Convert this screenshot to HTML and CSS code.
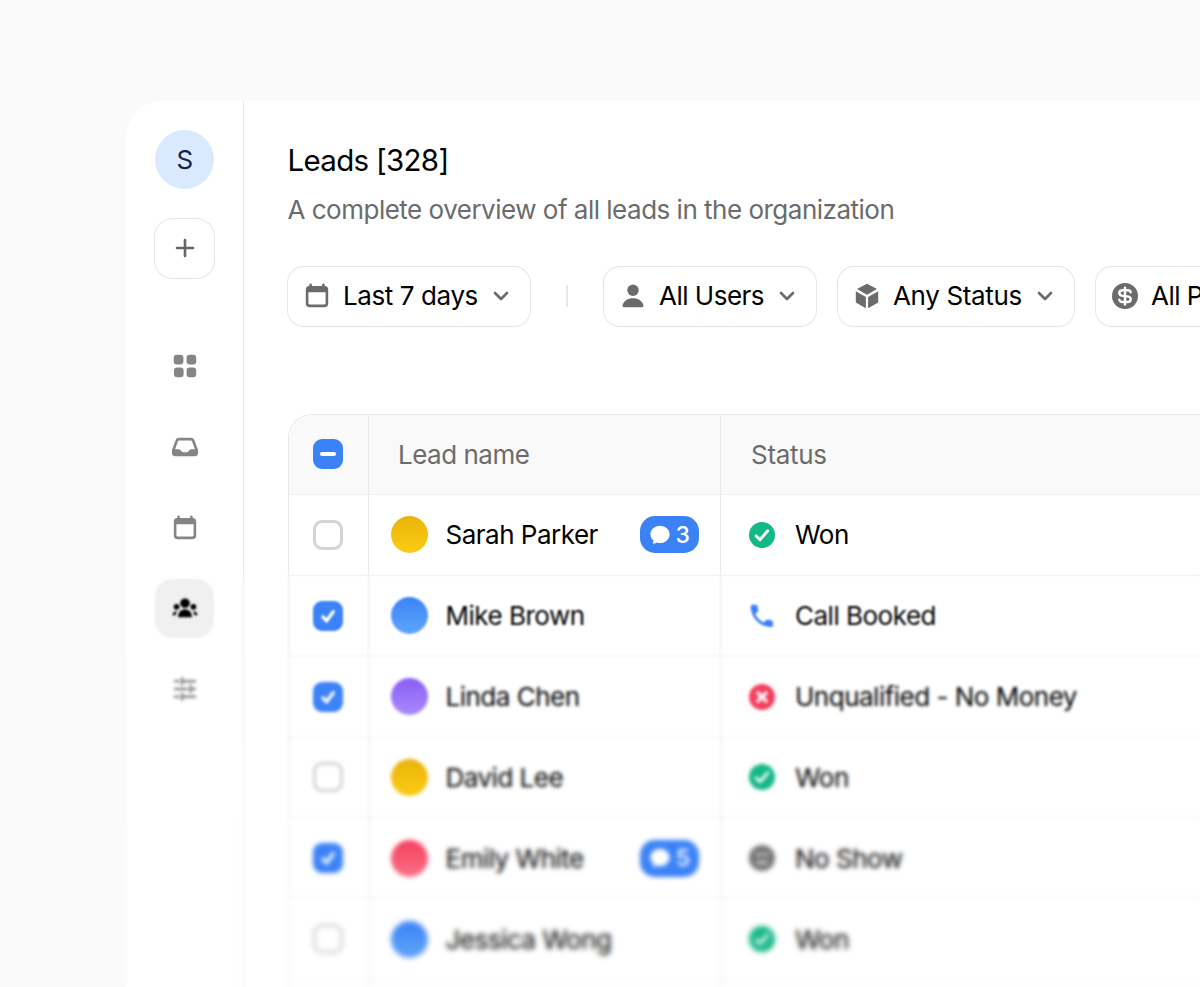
FILE: index.html
```html
<!DOCTYPE html>
<html lang="en">
<head>
<meta charset="utf-8">
<title>Leads</title>
<link rel="stylesheet" href="styles.css">
</head>
<body>
<svg class="defs" width="0" height="0" aria-hidden="true">
  <symbol id="calendar" viewBox="0 0 26 28">
    <path fill="currentColor" fill-rule="evenodd" d="M5.300 2.700a1.300 1.300 0 0 1 2.600 0V4h10.200V2.700a1.300 1.300 0 0 1 2.600 0V4a3.800 3.800 0 0 1 3.500 3.800v13.400a4 4 0 0 1-4 4H5.800a4 4 0 0 1-4-4V7.800A3.800 3.800 0 0 1 5.300 4zM4.400 10.200v10.800a1.600 1.600 0 0 0 1.600 1.600h14a1.600 1.600 0 0 0 1.600-1.600V10.200z"/>
  </symbol>
  <symbol id="chevron" viewBox="0 0 16 10"><path d="M2 2l6 6 6-6" fill="none" stroke="currentColor" stroke-width="2.700" stroke-linecap="round" stroke-linejoin="round"/></symbol>
  <symbol id="check" viewBox="0 0 30 30"><path d="M9.900 15.900l3.600 4 6.700-9.200" fill="none" stroke="#fff" stroke-width="3.400" stroke-linecap="round" stroke-linejoin="round"/></symbol>
  <symbol id="won" viewBox="0 0 26 26"><circle cx="13" cy="13" r="13" fill="#12b886"/><path d="M7.200 13.900l3.800 3.900 7.700-9" fill="none" stroke="#fff" stroke-width="2.900" stroke-linecap="round" stroke-linejoin="round"/></symbol>
  <symbol id="bubble" viewBox="0 0 20 20"><path fill="#fff" d="M10 .8c5.300 0 9.600 3.800 9.600 8.600S15.300 18 10 18c-1.300 0-2.400-.2-3.400-.6-1 .8-2.300 1.300-3.600 1.200-.4 0-.5-.5-.2-.8.500-.7.800-1.600.7-2.500C1.500 13.700.4 11.700.4 9.400.4 4.600 4.700.8 10 .8z"/></symbol>
</svg>
<div class="panel">
  <aside class="sidebar">
    <div class="user">S</div>
    <button class="add"><svg width="20" height="20" viewBox="0 0 20 20"><path d="M10 2v16M2 10h16" stroke="#666" stroke-width="2.600" stroke-linecap="round"/></svg></button>
    <nav class="nav">
      <a class="nav-item"><svg width="24" height="24" viewBox="0 0 24 24" fill="currentColor"><rect x=".800" y=".800" width="9.600" height="9.600" rx="3"/><rect x="13.600" y=".800" width="9.600" height="9.600" rx="3"/><rect x="1" y="13.600" width="9.600" height="9.600" rx="3"/><rect x="13.600" y="13.600" width="9.600" height="9.600" rx="3"/></svg></a>
      <a class="nav-item"><svg width="28" height="20" viewBox="0 0 28 20"><path fill="currentColor" fill-rule="evenodd" d="M7.700.7h12.600a3 3 0 0 1 2.800 1.900l3.600 9.300q.3.700.3 1.500v2.600a3.300 3.300 0 0 1-3.300 3.300H4.300A3.300 3.300 0 0 1 1 16v-2.600q0-.8.300-1.500l3.600-9.300A3 3 0 0 1 7.700.7zm.4 2.700a1 1 0 0 0-1 .7L4.100 12.200h3.800q.9 0 1.500.8l1.100 1.300q.7.900 1.800.9h3.400q1.100 0 1.800-.9l1.100-1.300q.6-.8 1.500-.8h3.800L20.900 4.100a1 1 0 0 0-1-.7z"/></svg></a>
      <a class="nav-item"><svg width="26" height="28"><use href="#calendar"/></svg></a>
      <a class="nav-item active"><svg width="26" height="20" viewBox="0 0 26 20" fill="currentColor"><circle cx="13" cy="5.200" r="4.800"/><circle cx="4.600" cy="8.800" r="2.900"/><circle cx="21.400" cy="8.800" r="2.900"/><path d="M6 19.300c0-4.400 2.700-8 7-8s7 3.600 7 8zM4.900 13.300c-2.500 0-4.200 1.500-4.500 3.900h3.200c.2-1.400.7-2.700 1.300-3.900zM21.100 13.300c2.500 0 4.200 1.500 4.500 3.900h-3.200c-.2-1.400-.7-2.700-1.300-3.900z"/></svg></a>
      <a class="nav-item"><svg width="24" height="24" viewBox="0 0 24 24" fill="none" stroke="currentColor" stroke-width="2.400" stroke-linecap="round"><path d="M2 4.300h3.500M9 4.300h13M9 1.300v6M2 12h12M18.500 12H22M17.500 9v6M2 19.700h3.500M9 19.700h13M9 16.700v6"/></svg></a>
    </nav>
  </aside>
  <main class="main">
    <h1 class="title">Leads [328]</h1>
    <p class="subtitle">A complete overview of all leads in the organization</p>
    <div class="filters">
      <button class="filter filter-date"><svg width="26" height="28"><use href="#calendar"/></svg><span>Last 7 days</span><svg class="chev" width="16" height="10"><use href="#chevron"/></svg></button>
      <i class="separator"></i>
      <button class="filter filter-users"><svg width="26" height="26" viewBox="0 0 26 26" fill="currentColor"><circle cx="13" cy="7.300" r="5.700"/><path d="M2.600 22.500C3.500 17.900 7.800 15.300 13 15.300s9.500 2.600 10.400 7.200c.2.900-.4 1.700-1.300 1.700H3.900c-.9 0-1.500-.8-1.300-1.700z"/></svg><span>All Users</span><svg class="chev" width="16" height="10"><use href="#chevron"/></svg></button>
      <button class="filter filter-status"><svg width="26" height="26" viewBox="0 0 26 26" fill="currentColor"><path d="M13 .7l10 5.400-10 5.700L3 6.100zM1.800 8.200l10.100 5.700v11.300L1.800 19.500zM24.200 8.200v11.300l-10.100 5.700V13.900z"/></svg><span>Any Status</span><svg class="chev" width="16" height="10"><use href="#chevron"/></svg></button>
      <button class="filter filter-price"><svg width="26" height="26" viewBox="0 0 26 26"><circle cx="13" cy="13" r="13" fill="currentColor"/><path d="M18.700 9.300C18.500 8 17.200 7.200 15.300 7.200h-4.600C8.600 7.200 7.300 8.300 7.300 10s1.300 2.600 3.300 2.900l4.800.5c2 .3 3.300 1.200 3.300 2.900s-1.300 2.700-3.400 2.700h-4.600c-1.900 0-3.200-.8-3.400-2.400M13 4.600v16.800" fill="none" stroke="#fff" stroke-width="2.400" stroke-linecap="round"/></svg><span>All P</span></button>
    </div>
    <div class="table">
      <div class="row head"><div class="cell pick"><b class="box on"><i class="dash"></i></b></div><div class="cell th">Lead name</div><div class="cell th">Status</div></div>
      <div class="row"><div class="cell pick"><b class="box"></b></div><div class="cell name"><i class="dot amber"></i><span>Sarah Parker</span><b class="badge"><svg width="20" height="20"><use href="#bubble"/></svg>3</b></div><div class="cell status"><svg width="26" height="26"><use href="#won"/></svg><span>Won</span></div></div>
      <div class="row"><div class="cell pick"><b class="box on"><svg width="30" height="30"><use href="#check"/></svg></b></div><div class="cell name"><i class="dot blue"></i><span>Mike Brown</span></div><div class="cell status"><svg width="26" height="26" viewBox="0 0 26 26"><path fill="#3b82f6" d="M3.600 1.800h3.200c.8 0 1.400.5 1.600 1.300l.8 4.100c.1.600-.1 1.200-.5 1.600L6.300 10.900c1.800 4 4.700 6.800 8.500 8.500l2.300-2.300c.4-.4 1-.6 1.600-.5l4 .8c.8.200 1.300.8 1.300 1.600v3.200c0 1.200-1 2-2.200 1.900C10.700 23.400 2.500 15.400 1.700 4c-.1-1.200.7-2.200 1.900-2.200z"/></svg><span>Call Booked</span></div></div>
      <div class="row"><div class="cell pick"><b class="box on"><svg width="30" height="30"><use href="#check"/></svg></b></div><div class="cell name"><i class="dot violet"></i><span>Linda Chen</span></div><div class="cell status"><svg width="26" height="26" viewBox="0 0 26 26"><circle cx="13" cy="13" r="13" fill="#f43f5e"/><path d="M9 9l8 8M17 9l-8 8" stroke="#fff" stroke-width="3.200" stroke-linecap="round"/></svg><span>Unqualified - No Money</span></div></div>
      <div class="row"><div class="cell pick"><b class="box"></b></div><div class="cell name"><i class="dot amber"></i><span>David Lee</span></div><div class="cell status"><svg width="26" height="26"><use href="#won"/></svg><span>Won</span></div></div>
      <div class="row"><div class="cell pick"><b class="box on"><svg width="30" height="30"><use href="#check"/></svg></b></div><div class="cell name"><i class="dot rose"></i><span>Emily White</span><b class="badge"><svg width="20" height="20"><use href="#bubble"/></svg>5</b></div><div class="cell status"><svg width="26" height="26" viewBox="0 0 26 26"><circle cx="13" cy="13" r="13" fill="#757575"/><path d="M8 9.500h3M15 9.500h3M8.500 17.500h9" fill="none" stroke="#fff" stroke-width="2.200" stroke-linecap="round"/></svg><span>No Show</span></div></div>
      <div class="row"><div class="cell pick"><b class="box"></b></div><div class="cell name"><i class="dot blue"></i><span>Jessica Wong</span></div><div class="cell status"><svg width="26" height="26"><use href="#won"/></svg><span>Won</span></div></div>
      <div class="row"><div class="cell pick"></div><div class="cell name"></div><div class="cell status"></div></div>
    </div>
  </main>
</div>
<div class="haze haze-1"></div>
<div class="haze haze-2"></div>
<div class="haze haze-3"></div>
<div class="haze haze-4"></div>
<div class="haze haze-5"></div>
</body>
</html>
```
FILE: styles.css
```css
* { box-sizing: border-box; }
body {
  margin: 0;
  height: 987px;
  overflow: hidden;
  background: #fafafa;
  font-family: Inter, "Liberation Sans", sans-serif;
  font-size: 26px;
  letter-spacing: -.5px;
  color: #000;
  position: relative;
  display: flow-root;
}
svg { display: block; flex: none; }
.defs { position: absolute; }
button { font: inherit; letter-spacing: inherit; color: inherit; padding: 0; border: 0; background: #fff; }
.panel {
  margin: 101px 0 0 126px;
  height: 886px;
  overflow: hidden;
  display: flex;
  background: #fff;
  border-radius: 36px 0 0 0;
}
.sidebar {
  width: 118px;
  flex: none;
  padding-top: 29px;
  display: flex;
  flex-direction: column;
  align-items: center;
  border-right: 1px solid #e8e8e8;
}
.user {
  width: 59px;
  height: 59px;
  flex: none;
  border-radius: 50%;
  background: #dbe9fe;
  color: #14204d;
  display: grid;
  place-items: center;
}
.add {
  width: 59px;
  height: 59px;
  flex: none;
  margin-top: 29.500px;
  border-radius: 18px;
  display: grid;
  place-items: center;
  box-shadow: 0 0 0 1px #e6e6e6, 0 1px 2px rgba(0, 0, 0, .04);
}
.nav { margin-top: 59px; display: flex; flex-direction: column; gap: 21.800px; }
.nav-item {
  width: 59px;
  height: 59px;
  flex: none;
  border-radius: 18px;
  display: grid;
  place-items: center;
  color: #858585;
}
.nav-item.active { background: #f0f0f0; color: #000; }
.main { flex: 1; min-width: 0; padding: 41px 0 0 43px; }
.title { margin: 0; padding-left: .500px; font-size: 29.500px; line-height: 36px; font-weight: 400; letter-spacing: -.7px; }
.subtitle { margin: 16px 0 0; padding-left: .500px; line-height: 32px; color: #6b6b6b; white-space: nowrap; letter-spacing: -.5px; }
.filters { display: flex; align-items: center; margin: 40.500px 0 0 1px; }
.filter {
  height: 59px;
  flex: none;
  display: flex;
  align-items: center;
  border-radius: 16px;
  padding-left: 16px;
  white-space: nowrap;
  box-shadow: 0 0 0 1px #e6e6e6, 0 1px 2px rgba(0, 0, 0, .04);
}
.filter svg { color: #6b6b6b; }
.filter span { margin-left: 13px; padding-bottom: 1px; }
.filter .chev { margin-left: auto; margin-right: 21px; }
.filter-date { width: 242px; letter-spacing: -.4px; }
.filter-users { width: 212px; margin-right: 22px; }
.filter-status { width: 236px; margin-right: 22px; letter-spacing: -.35px; }
.filter-price { width: 260px; }
.separator { width: 2px; height: 22px; margin: 0 36px; background: #e8e8e8; flex: none; }
.table {
  margin: 88.500px 0 0 1px;
  border: 1px solid #e9e9e9;
  border-right: 0;
  border-radius: 24px 0 0 0;
  overflow: hidden;
}
.row { display: flex; height: 80.850px; border-bottom: 1px solid #eee; }
.row.head { height: 80px; background: #f9f9f9; color: #6b6b6b; }
.cell { display: flex; align-items: center; white-space: nowrap; }
.cell.pick { width: 80px; flex: none; justify-content: center; padding-right: 1px; border-right: 1px solid #e9e9e9; }
.head .pick { padding-bottom: 1px; }
.pick + .cell { width: 352px; flex: none; border-right: 1px solid #e9e9e9; padding: 0 21px 0 21.500px; }
.pick + .cell.th { padding-left: 29px; }
.cell.status { padding-left: 28px; gap: 20px; }
.cell.th:last-child { padding-left: 30px; letter-spacing: -.3px; }
.box {
  width: 30px;
  height: 30px;
  border-radius: 9px;
  border: 3.300px solid #d4d4d4;
  display: grid;
  place-items: center;
}
.box.on { border: 0; background: #3b82f6; }
.dash { width: 16px; height: 4px; border-radius: 2px; background: #fff; }
.dot { width: 37px; height: 37px; border-radius: 50%; margin-right: 18px; flex: none; }
.amber { background: linear-gradient(#eab308, #facc15); }
.blue { background: linear-gradient(#3b82f6, #60a5fa); }
.violet { background: linear-gradient(#8b5cf6, #a78bfa); }
.rose { background: linear-gradient(#f43f5e, #fb7185); }
.badge {
  margin-left: auto;
  width: 59px;
  height: 37px;
  border-radius: 15px;
  background: #3b82f6;
  color: #fff;
  font-size: 23px;
  font-weight: 500;
  display: flex;
  align-items: center;
  justify-content: center;
  gap: 6px;
}
/* progressive blur: every layer adds to the ones above it */
.haze { position: absolute; left: 0; right: 0; bottom: 0; pointer-events: none; mask-image: linear-gradient(transparent, #000 18px); }
.haze-1 { top: 568px; backdrop-filter: blur(.8px); }
.haze-2 { top: 648px; backdrop-filter: blur(.9px); }
.haze-3 { top: 729px; backdrop-filter: blur(1.200px); }
.haze-4 { top: 810px; backdrop-filter: blur(1.700px); }
.haze-5 { top: 891px; backdrop-filter: blur(1.800px); }
```
